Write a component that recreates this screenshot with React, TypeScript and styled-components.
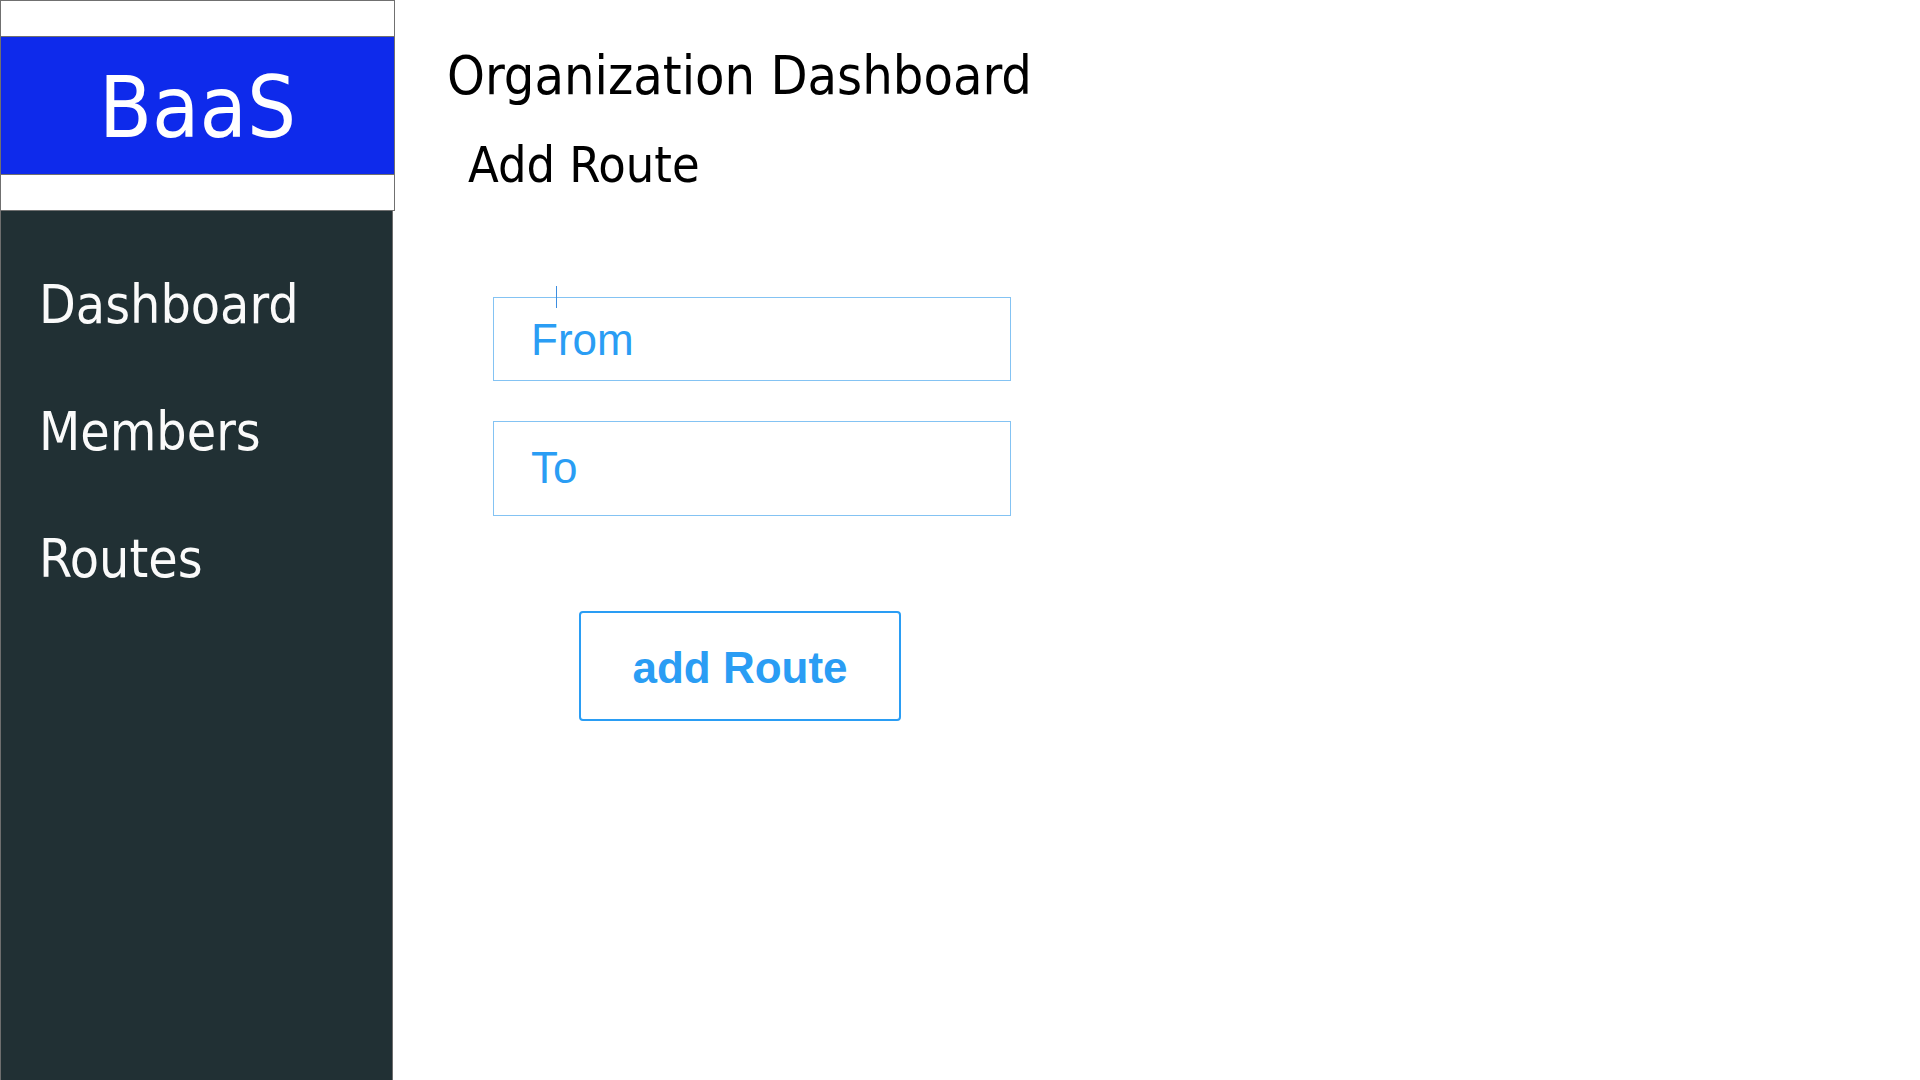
import React from "react";
import styled, { createGlobalStyle } from "styled-components";

const GlobalStyle = createGlobalStyle`
  html, body {
    margin: 0;
    padding: 0;
    background: #ffffff;
  }
  * { box-sizing: border-box; }
`;

const narrow = `"DejaVu Sans Condensed", "DejaVu Sans", sans-serif`;

const Page = styled.div`
  display: flex;
  width: 100%;
  min-height: 100vh;
  height: 1080px;
  font-family: ${narrow};
  font-stretch: semi-condensed;
`;

const Sidebar = styled.aside`
  display: flex;
  flex-direction: column;
  width: 395px;
  flex: 0 0 395px;
`;

const LogoBox = styled.div`
  display: flex;
  flex-direction: column;
  justify-content: center;
  height: 211px;
  border: 1px solid #707070;
  background: #ffffff;
`;

const LogoBand = styled.div`
  display: flex;
  align-items: center;
  justify-content: center;
  height: 139px;
  background: #0e2aeb;
  border-top: 1px solid #707070;
  border-bottom: 1px solid #707070;
  color: #ffffff;
  font-size: 86px;
  line-height: 1;
  padding-top: 3px;
`;

const Nav = styled.nav`
  display: flex;
  flex-direction: column;
  flex: 1;
  width: 393px;
  padding: 31px 0 0 38px;
  background: #213034;
  border-left: 1px solid #6e6e6e;
  border-right: 1px solid #6e6e6e;
`;

const NavItem = styled.a`
  display: block;
  height: 127px;
  line-height: 127px;
  font-size: 53.2px;
  color: #fafafa;
  text-decoration: none;
  cursor: pointer;
`;

const Main = styled.main`
  display: flex;
  flex-direction: column;
  flex: 1;
  padding: 44px 0 0 52px;
  color: #000000;
`;

const Title = styled.h1`
  margin: 0;
  font-size: 53.6px;
  line-height: 64px;
  font-weight: normal;
`;

const SubTitle = styled.h2`
  margin: 28px 0 0 21px;
  font-size: 50px;
  line-height: 58px;
  font-weight: normal;
`;

const Form = styled.form`
  display: flex;
  flex-direction: column;
  align-items: flex-start;
  gap: 40px;
  margin: 103px 0 0 46px;
`;

const FieldWrap = styled.div`
  position: relative;
`;

const Caret = styled.span`
  position: absolute;
  left: 63px;
  top: -11px;
  width: 1px;
  height: 22px;
  background: #3d8ee0;
`;

const Field = styled.input<{ $h: number; $pt: number; $pb: number }>`
  display: block;
  width: 518px;
  height: ${(p) => p.$h}px;
  padding: ${(p) => p.$pt}px 0 ${(p) => p.$pb}px 37px;
  border: 1px solid #84c3f3;
  border-radius: 0;
  outline: none;
  background: #ffffff;
  font-family: "Liberation Sans", Arial, sans-serif;
  font-size: 44px;
  color: #2a9df4;
  &::placeholder {
    color: #2a9df4;
    opacity: 1;
  }
`;

const SubmitButton = styled.button`
  margin: 55px 0 0 86px;
  width: 322px;
  height: 110px;
  padding: 3px 0 0 0;
  border: 2px solid #2a9df4;
  border-radius: 4px;
  background: #ffffff;
  color: #2a9df4;
  font-family: "Liberation Sans", Arial, sans-serif;
  font-weight: bold;
  font-size: 44px;
  cursor: pointer;
`;

export default function App() {
  return (
    <>
      <GlobalStyle />
      <Page>
        <Sidebar>
          <LogoBox>
            <LogoBand>BaaS</LogoBand>
          </LogoBox>
          <Nav>
            <NavItem>Dashboard</NavItem>
            <NavItem>Members</NavItem>
            <NavItem>Routes</NavItem>
          </Nav>
        </Sidebar>
        <Main>
          <Title>Organization Dashboard</Title>
          <SubTitle>Add Route</SubTitle>
          <Form onSubmit={(e) => e.preventDefault()}>
            <FieldWrap>
              <Caret />
              <Field $h={84} $pt={2} $pb={0} placeholder="From" />
            </FieldWrap>
            <FieldWrap>
              <Field $h={95} $pt={0} $pb={1} placeholder="To" />
            </FieldWrap>
            <SubmitButton type="submit">add Route</SubmitButton>
          </Form>
        </Main>
      </Page>
    </>
  );
}
